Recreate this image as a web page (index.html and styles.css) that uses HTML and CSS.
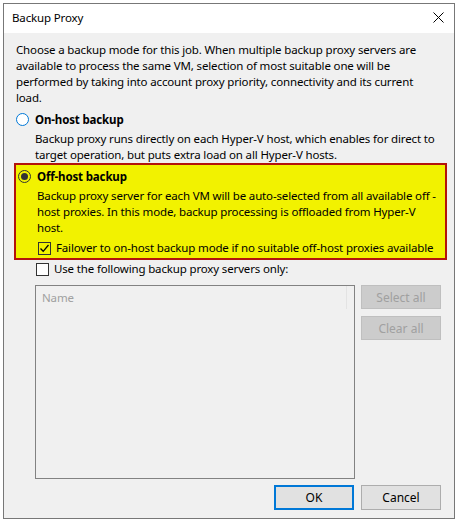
FILE: index.html
```html
<!DOCTYPE html>
<html lang="en">
<head>
    <meta charset="UTF-8">
    <meta name="viewport" content="width=device-width, initial-scale=1.0">
    <title>Backup Proxy</title>
    <link rel="stylesheet" href="styles.css">
</head>
<body>
    <div class="dialog">
        <div class="titlebar">
            <span class="title">Backup Proxy</span>
            <span class="close">
                <svg width="11" height="11" viewBox="0 0 11 11"><path d="M0.5 0.5 L10.5 10.5 M10.5 0.5 L0.5 10.5" stroke="#000" stroke-width="1" fill="none"/></svg>
            </span>
        </div>
        <div class="content">
            <p class="intro">Choose a backup mode for this job. When multiple backup proxy servers are available to process the same VM, selection of most suitable one will be performed by taking into account proxy priority, connectivity and its current load.</p>

            <div class="option">
                <div class="option-head"><span class="radio"></span><span class="option-title">On-host backup</span></div>
                <p class="option-desc">Backup proxy runs directly on each Hyper-V host, which enables for direct to target operation, but puts extra load on all Hyper-V hosts.</p>
            </div>

            <div class="option highlight">
                <div class="option-head"><span class="radio checked"></span><span class="option-title">Off-host backup</span></div>
                <p class="option-desc">Backup proxy server for each VM will be auto-selected from all available off - host proxies. In this mode, backup processing is offloaded from Hyper-V host.</p>
                <div class="check-row"><span class="checkbox checked">
                    <svg width="11" height="11" viewBox="0 0 11 11"><path d="M1.5 5.5 L4.2 8.3 L9.5 2" stroke="#000" stroke-width="1.3" fill="none"/></svg>
                </span>Failover to on-host backup mode if no suitable off-host proxies available</div>
            </div>

            <div class="check-row use-row"><span class="checkbox"></span>Use the following backup proxy servers only:</div>

            <div class="proxy-area">
                <div class="list">
                    <div class="list-head"><span class="col">Name</span></div>
                </div>
                <div class="side-buttons">
                    <button class="btn" disabled>Select all</button>
                    <button class="btn" disabled>Clear all</button>
                </div>
            </div>

            <div class="footer">
                <button class="btn primary">OK</button>
                <button class="btn">Cancel</button>
            </div>
        </div>
    </div>
</body>
</html>
```

FILE: styles.css
```css
body {
    margin: 0;
    background: #fff;
    font-family: 'Noto Sans', 'Open Sans', sans-serif;
    font-size: 11.5px;
    letter-spacing: -0.15px;
    color: #000;
}
.dialog {
    margin: 3px;
    width: 450px;
    height: 514px;
    border: 1px solid #777;
    background: #f0f0f0;
    display: flex;
    flex-direction: column;
}
.titlebar {
    height: 29px;
    background: #fff;
    display: flex;
    align-items: center;
    justify-content: space-between;
    padding: 0 10px 0 8px;
}
.title {
    line-height: 16px;
    margin-top: -1px;
}
.close {
    display: flex;
    margin-top: -2px;
}
.content {
    padding: 9px 13px 0 12px;
}
p {
    margin: 0;
    line-height: 16px;
}
.option-head {
    display: flex;
    align-items: center;
    height: 16px;
    margin-top: 5px;
}
.option-title {
    font-weight: bold;
}
.radio {
    width: 11px;
    height: 11px;
    border: 1px solid #0078d7;
    border-radius: 50%;
    background: #fff;
    margin-right: 6px;
    box-sizing: content-box;
    position: relative;
}
.radio.checked {
    border-color: #333;
    background: transparent;
}
.radio.checked::after {
    content: "";
    position: absolute;
    left: 2px;
    top: 2px;
    width: 7px;
    height: 7px;
    border-radius: 50%;
    background: #333;
}
.option-desc {
    margin: 4px 0 0 19px;
}
.highlight {
    background: #f2f200;
    border: 2px solid #b3140c;
    margin: 0 -6px 0 -2px;
    padding: 3px 9px 2px 2px;
}
.highlight .option-head {
    margin-top: 0;
}
.check-row {
    display: flex;
    align-items: center;
    height: 16px;
    margin: 4px 0 0 20px;
    line-height: 16px;
    white-space: nowrap;
}
.checkbox {
    width: 11px;
    height: 11px;
    border: 1px solid #333;
    background: #fff;
    margin-right: 5px;
    display: flex;
    align-items: center;
    justify-content: center;
}
.checkbox.checked {
    background: transparent;
}
.use-row {
    margin-top: 1px;
}
.proxy-area {
    display: flex;
    gap: 6px;
    margin: 8px 0 0 19px;
}
.list {
    width: 318px;
    height: 192px;
    border: 1px solid #828282;
}
.list-head {
    height: 23px;
    width: 310px;
    border-right: 1px solid #e3e3e3;
    display: flex;
    align-items: center;
}
.col {
    color: #a0a0a0;
    padding-left: 6px;
}
.side-buttons {
    display: flex;
    flex-direction: column;
    gap: 7px;
}
.btn {
    width: 80px;
    height: 24px;
    font-family: inherit;
    font-size: 12px;
    background: #e1e1e1;
    border: 1px solid #adadad;
    color: #000;
    padding: 0;
}
.btn:disabled {
    background: #cccccc;
    border-color: #bfbfbf;
    color: #a0a0a0;
}
.footer {
    display: flex;
    justify-content: flex-end;
    gap: 7px;
    margin-top: 6px;
}
.footer .btn {
    height: 25px;
}
.btn.primary {
    border: 2px solid #0078d7;
}
```
